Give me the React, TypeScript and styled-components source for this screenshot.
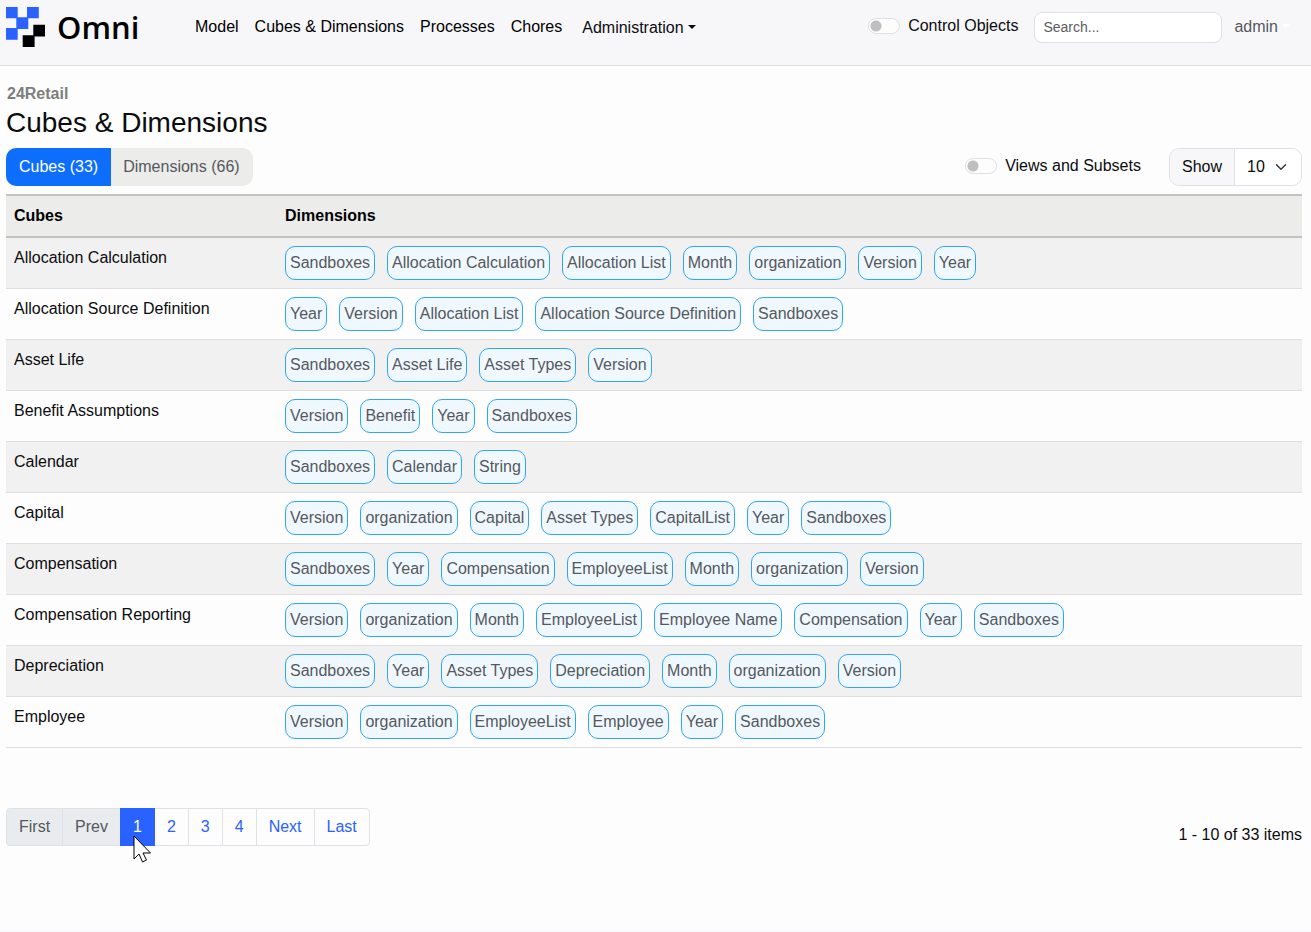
import React from 'react';
import styled, { createGlobalStyle, css } from 'styled-components';

const GlobalStyle = createGlobalStyle`
  *, *::before, *::after { box-sizing: border-box; }
  body {
    margin: 0;
    background: #fdfdfd;
    color: #0b0c0e;
    font: 16px/24px "Liberation Sans", Arial, sans-serif;
  }
  button, input, select { font: inherit; color: inherit; margin: 0; }
  a { color: inherit; text-decoration: none; }
`;

const Page = styled.div`
  display: flex;
  flex-direction: column;
  min-height: 100vh;
  border-bottom: 1px solid #f5f5f7;
`;

const NavBar = styled.header`
  display: flex;
  align-items: flex-start;
  padding: 7px 21px 18px 6px;
  background: #f7f7fa;
  border-bottom: 1px solid #dfdfe6;
`;

const Brand = styled.a`
  display: flex;
  align-items: center;
  gap: 11px;
  width: 181px;
  height: 40px;
  color: #000;
  font: 600 31px/40px "Open Sans", sans-serif;
`;

const Nav = styled.nav`
  display: flex;
  padding-top: 8px;
`;

const NavLink = styled.a`
  padding: 0 8px;
  color: #000;
`;

const Caret = styled.span<{ $color?: string }>`
  display: inline-block;
  margin-left: 4px;
  vertical-align: 4px;
  border: 4px solid transparent;
  border-top-color: ${(p) => p.$color || 'currentColor'};
  border-bottom: 0;
`;

const MenuButton = styled.button<{ $muted?: boolean }>`
  padding: ${(p) => (p.$muted ? '3px 0 0 12px' : '1px 0 0 12px')};
  border: 0;
  background: none;
  color: ${(p) => (p.$muted ? '#55585c' : '#0b0c0e')};
`;

const SwitchLabel = styled.label`
  display: flex;
  align-items: center;
  gap: 8px;
  height: 24px;
  margin-bottom: 2px;
`;

const NavTools = styled.div`
  display: flex;
  align-items: flex-start;
  margin-left: auto;
  padding-top: 5px;
  ${SwitchLabel} { margin-top: 2px; }
`;

const SwitchInput = styled.input`
  appearance: none;
  width: 32px;
  height: 16px;
  margin: 0;
  border: 1px solid #dfdfe6;
  border-radius: 8px;
  background: #fdfdfd radial-gradient(circle at 7px 7px, #bfbfbf 5px, transparent 6px);
`;

const SearchInput = styled.input`
  width: 188px;
  height: 31px;
  margin-left: 16px;
  padding: 3px 8px 5px;
  border: 1px solid #dfdfe6;
  border-radius: 8px;
  background: #fff;
  font-size: 14px;
  line-height: 20px;
  &::placeholder { color: #595c5f; opacity: 1; }
`;

const Main = styled.main`
  padding: 16px 9px 0 6px;
`;

const Database = styled.div`
  padding-left: 1px;
  color: #7c7f7c;
  font-weight: bold;
`;

const Title = styled.h1`
  margin: 0 0 8px;
  font-size: 28px;
  line-height: 34px;
  font-weight: normal;
`;

const Toolbar = styled.div`
  display: flex;
  align-items: center;
  margin-bottom: 8px;
`;

const TabGroup = styled.div`
  display: flex;
  margin-right: auto;
  border-radius: 10px;
  overflow: hidden;
`;

const Tab = styled.button<{ $active?: boolean }>`
  height: 38px;
  padding: 0 13px;
  border: 0;
  background: ${(p) => (p.$active ? '#0d6efd' : '#ececeb')};
  color: ${(p) => (p.$active ? '#fff' : '#55585c')};
  & + & { padding-left: 12px; }
`;

const ShowGroup = styled.div`
  display: flex;
  height: 38px;
  margin-left: 28px;
  border: 1px solid #dfdfe6;
  border-radius: 10px;
  overflow: hidden;
  line-height: 36px;
`;

const ShowLabel = styled.label`
  padding: 0 12px;
  background: #f7f7fa;
  border-right: 1px solid #dfdfe6;
`;

const SelectWrap = styled.div`
  position: relative;
  svg {
    position: absolute;
    right: 14px;
    top: 12px;
    pointer-events: none;
  }
`;

const Select = styled.select`
  appearance: none;
  display: block;
  width: 66px;
  height: 36px;
  padding: 0 12px;
  border: 0;
  background: #fff;
`;

const Table = styled.table`
  width: 100%;
  border-collapse: separate;
  border-spacing: 0;
  table-layout: fixed;
  th, td { padding: 8px; text-align: left; vertical-align: top; }
  th {
    background: #ececeb;
    color: #000;
    border: solid #c2c2c2;
    border-width: 2px 0;
  }
  th:first-child { width: 271px; }
  td { border-bottom: 1px solid #dfdfe2; }
  tbody tr:nth-child(odd) { background: #f1f1f1; }
`;

const ChipList = styled.div`
  display: flex;
  flex-wrap: wrap;
  gap: 12px;
`;

const Chip = styled.a`
  padding: 4px;
  border: 1px solid #32a4f6;
  border-radius: 10px;
  background: #f0f8ff;
  color: #55585c;
`;

const Footer = styled.div`
  display: flex;
  justify-content: space-between;
  align-items: flex-start;
  padding-top: 60px;
`;

const Pagination = styled.nav`
  display: flex;
`;

const PageButton = styled.button<{ $active?: boolean }>`
  position: relative;
  height: 38px;
  padding: 0 12px;
  border: 1px solid #dee2e6;
  background: #fdfdfd;
  color: #2962ff;
  & + & { margin-left: -1px; }
  &:first-child { border-radius: 4px 0 0 4px; }
  &:last-child { border-radius: 0 4px 4px 0; }
  &:disabled { background: #e9ecef; color: #55585c; }
  ${(p) =>
    p.$active &&
    css`
      z-index: 1;
      border-color: #2962ff;
      background: #2962ff;
      color: #fff;
    `}
`;

const Pointer = styled.svg`
  position: absolute;
  left: 12px;
  top: 26px;
  pointer-events: none;
`;

const Count = styled.div`
  padding-top: 15px;
`;

const rows: [string, string[]][] = [
  ['Allocation Calculation', ['Sandboxes', 'Allocation Calculation', 'Allocation List', 'Month', 'organization', 'Version', 'Year']],
  ['Allocation Source Definition', ['Year', 'Version', 'Allocation List', 'Allocation Source Definition', 'Sandboxes']],
  ['Asset Life', ['Sandboxes', 'Asset Life', 'Asset Types', 'Version']],
  ['Benefit Assumptions', ['Version', 'Benefit', 'Year', 'Sandboxes']],
  ['Calendar', ['Sandboxes', 'Calendar', 'String']],
  ['Capital', ['Version', 'organization', 'Capital', 'Asset Types', 'CapitalList', 'Year', 'Sandboxes']],
  ['Compensation', ['Sandboxes', 'Year', 'Compensation', 'EmployeeList', 'Month', 'organization', 'Version']],
  ['Compensation Reporting', ['Version', 'organization', 'Month', 'EmployeeList', 'Employee Name', 'Compensation', 'Year', 'Sandboxes']],
  ['Depreciation', ['Sandboxes', 'Year', 'Asset Types', 'Depreciation', 'Month', 'organization', 'Version']],
  ['Employee', ['Version', 'organization', 'EmployeeList', 'Employee', 'Year', 'Sandboxes']],
];

const navItems = ['Model', 'Cubes & Dimensions', 'Processes', 'Chores'];
const pages = ['First', 'Prev', '1', '2', '3', '4', 'Next', 'Last'];

function Logo() {
  return (
    <svg width="40" height="40" viewBox="0 0 40 40" aria-hidden="true">
      <path fill="#2962ff" d="M0 0h11.700v11.300h-11.700zM21 0h11.800v11.300h-11.800zM10.300 10.300h12v11.700h-12zM0 21h11.700v11.700h-11.700z" />
      <path fill="#000" d="M27.300 17.700h11.700v11.800h-11.700zM16.700 28.300h11.900v11.700h-11.900z" />
    </svg>
  );
}

export default function App() {
  return (
    <Page>
      <GlobalStyle />
      <NavBar>
        <Brand href="#">
          <Logo />
          Omni
        </Brand>
        <Nav>
          {navItems.map((item) => (
            <NavLink href="#" key={item}>{item}</NavLink>
          ))}
          <MenuButton>Administration<Caret /></MenuButton>
        </Nav>
        <NavTools>
          <SwitchLabel>
            <SwitchInput type="checkbox" role="switch" />
            Control Objects
          </SwitchLabel>
          <SearchInput type="search" placeholder="Search..." aria-label="Search" />
          <MenuButton $muted>admin<Caret $color="#fff" /></MenuButton>
        </NavTools>
      </NavBar>
      <Main>
        <Database>24Retail</Database>
        <Title>Cubes &amp; Dimensions</Title>
        <Toolbar>
          <TabGroup>
            <Tab $active>Cubes (33)</Tab>
            <Tab>Dimensions (66)</Tab>
          </TabGroup>
          <SwitchLabel>
            <SwitchInput type="checkbox" role="switch" />
            Views and Subsets
          </SwitchLabel>
          <ShowGroup>
            <ShowLabel htmlFor="page-size">Show</ShowLabel>
            <SelectWrap>
              <Select id="page-size" defaultValue="10">
                <option>10</option>
                <option>25</option>
                <option>50</option>
              </Select>
              <svg width="12" height="12" viewBox="0 0 16 16" fill="none" stroke="#343a40" strokeWidth="2" strokeLinecap="round" strokeLinejoin="round" aria-hidden="true">
                <path d="m2 5 6 6 6-6" />
              </svg>
            </SelectWrap>
          </ShowGroup>
        </Toolbar>
        <Table>
          <thead>
            <tr>
              <th scope="col">Cubes</th>
              <th scope="col">Dimensions</th>
            </tr>
          </thead>
          <tbody>
            {rows.map(([name, dimensions]) => (
              <tr key={name}>
                <td>{name}</td>
                <td>
                  <ChipList>
                    {dimensions.map((dimension) => (
                      <Chip href="#" key={dimension}>{dimension}</Chip>
                    ))}
                  </ChipList>
                </td>
              </tr>
            ))}
          </tbody>
        </Table>
        <Footer>
          <Pagination aria-label="Pages">
            {pages.map((page, index) => (
              <PageButton key={page} disabled={index < 2} $active={page === '1'}>
                {page}
                {page === '1' && (
                  <Pointer width="19" height="28" viewBox="0 0 19 28" aria-hidden="true">
                    <path d="M1 1v23l5-5 3.500 8 4-2-3.500-7h7.500z" fill="#fff" stroke="#000" />
                  </Pointer>
                )}
              </PageButton>
            ))}
          </Pagination>
          <Count>1 - 10 of 33 items</Count>
        </Footer>
      </Main>
    </Page>
  );
}
